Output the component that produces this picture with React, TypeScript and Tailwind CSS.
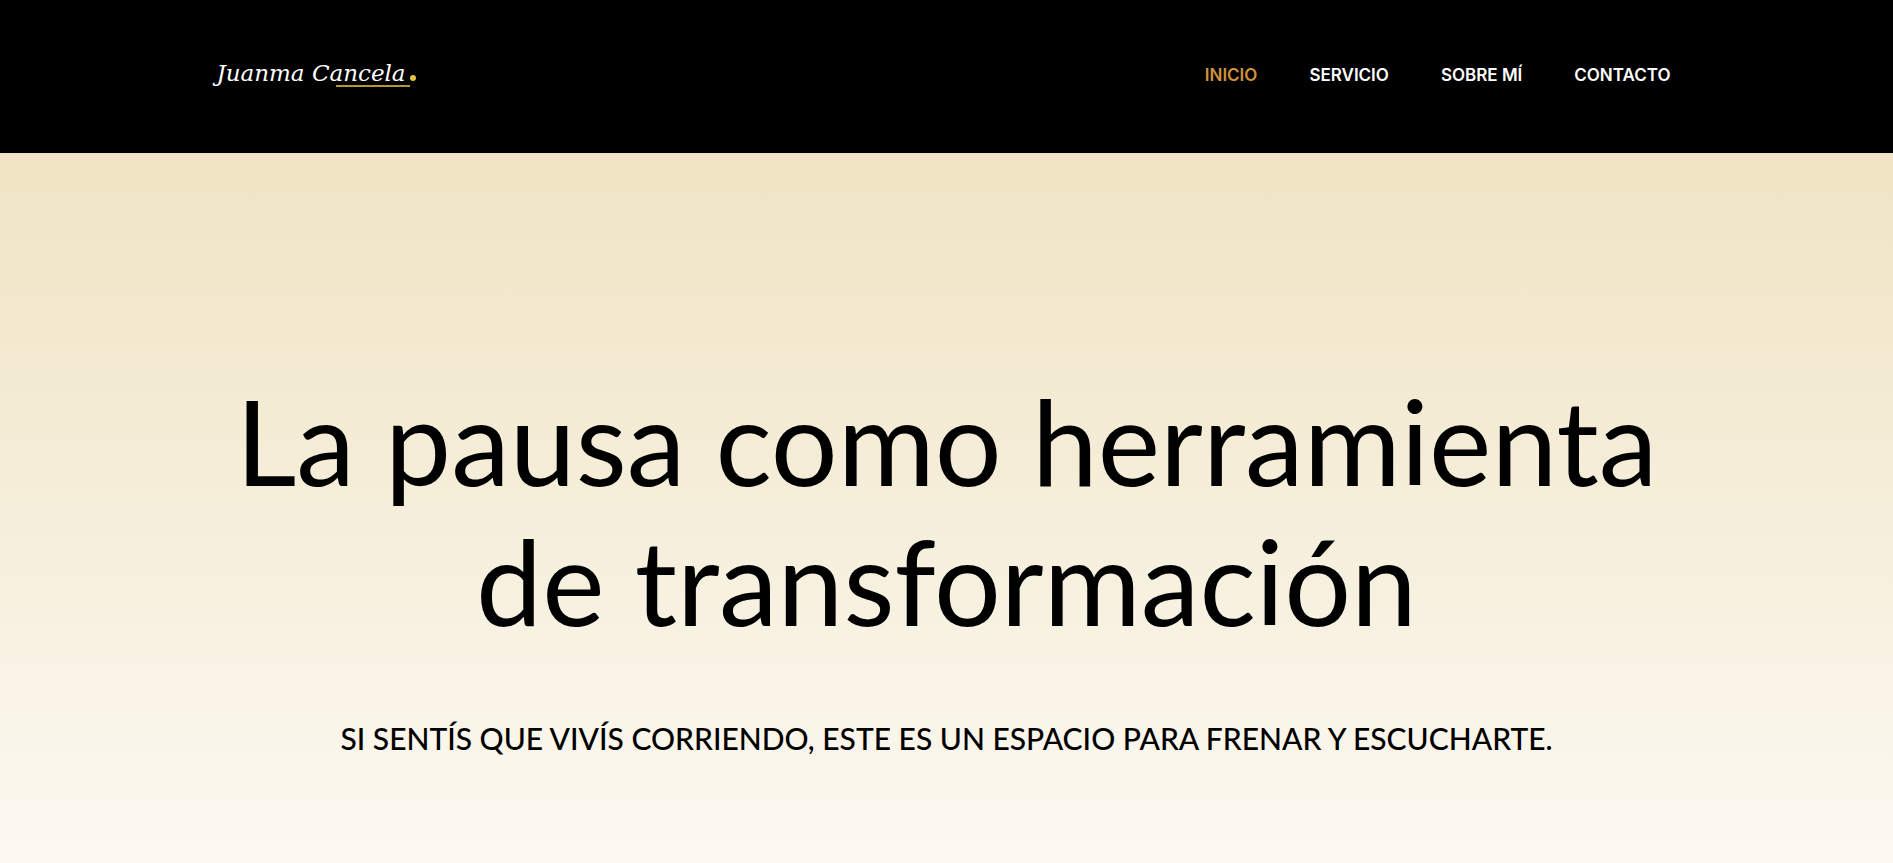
import React from 'react';

const navItems = [
  { label: 'INICIO', href: '#inicio', active: true },
  { label: 'SERVICIO', href: '#servicio', active: false },
  { label: 'SOBRE MÍ', href: '#sobre-mi', active: false },
  { label: 'CONTACTO', href: '#contacto', active: false },
];

const Logo: React.FC = () => (
  <a
    href="#inicio"
    className="relative flex items-baseline pb-1 whitespace-nowrap font-['DejaVu_Serif',serif] text-[23px] leading-8 italic text-white"
  >
    Juanma Cancela
    <span className="ml-1 h-1.5 w-1.5 rounded-full bg-[#e5c244]" />
    <span className="absolute right-1.5 bottom-1.5 h-0.5 w-[74px] bg-[#b8962f]" />
  </a>
);

const App: React.FC = () => {
  return (
    <div className="flex min-h-screen flex-col bg-[#fdf9f2]">
      <header className="bg-black pt-[54px] pb-[58px]">
        <div className="mx-auto flex h-[41px] w-full max-w-[1460px] items-center justify-between pr-1.5">
          <Logo />
          <nav className="flex gap-[52px] font-['Inter',sans-serif] text-[17px] leading-6 font-semibold">
            {navItems.map((item) => (
              <a
                key={item.label}
                href={item.href}
                className={item.active ? 'text-[#d1913c]' : 'text-white'}
              >
                {item.label}
              </a>
            ))}
          </nav>
        </div>
      </header>

      <main
        id="inicio"
        className="flex-1 bg-linear-to-b from-[#f0e4c4] via-[#f5eeda] to-[#fdf9f2] px-6 pt-[218px] pb-20 text-center font-['Lato',sans-serif] text-black"
      >
        <h1 className="mx-auto max-w-[1500px] text-[118px] leading-[140px]">
          La pausa como herramienta
          <br />
          de transformación
        </h1>
        <h2 className="mt-[67px] text-[30px] leading-10 font-medium">
          SI SENTÍS QUE VIVÍS CORRIENDO, ESTE ES UN ESPACIO PARA FRENAR Y ESCUCHARTE.
        </h2>
      </main>
    </div>
  );
};

export default App;
